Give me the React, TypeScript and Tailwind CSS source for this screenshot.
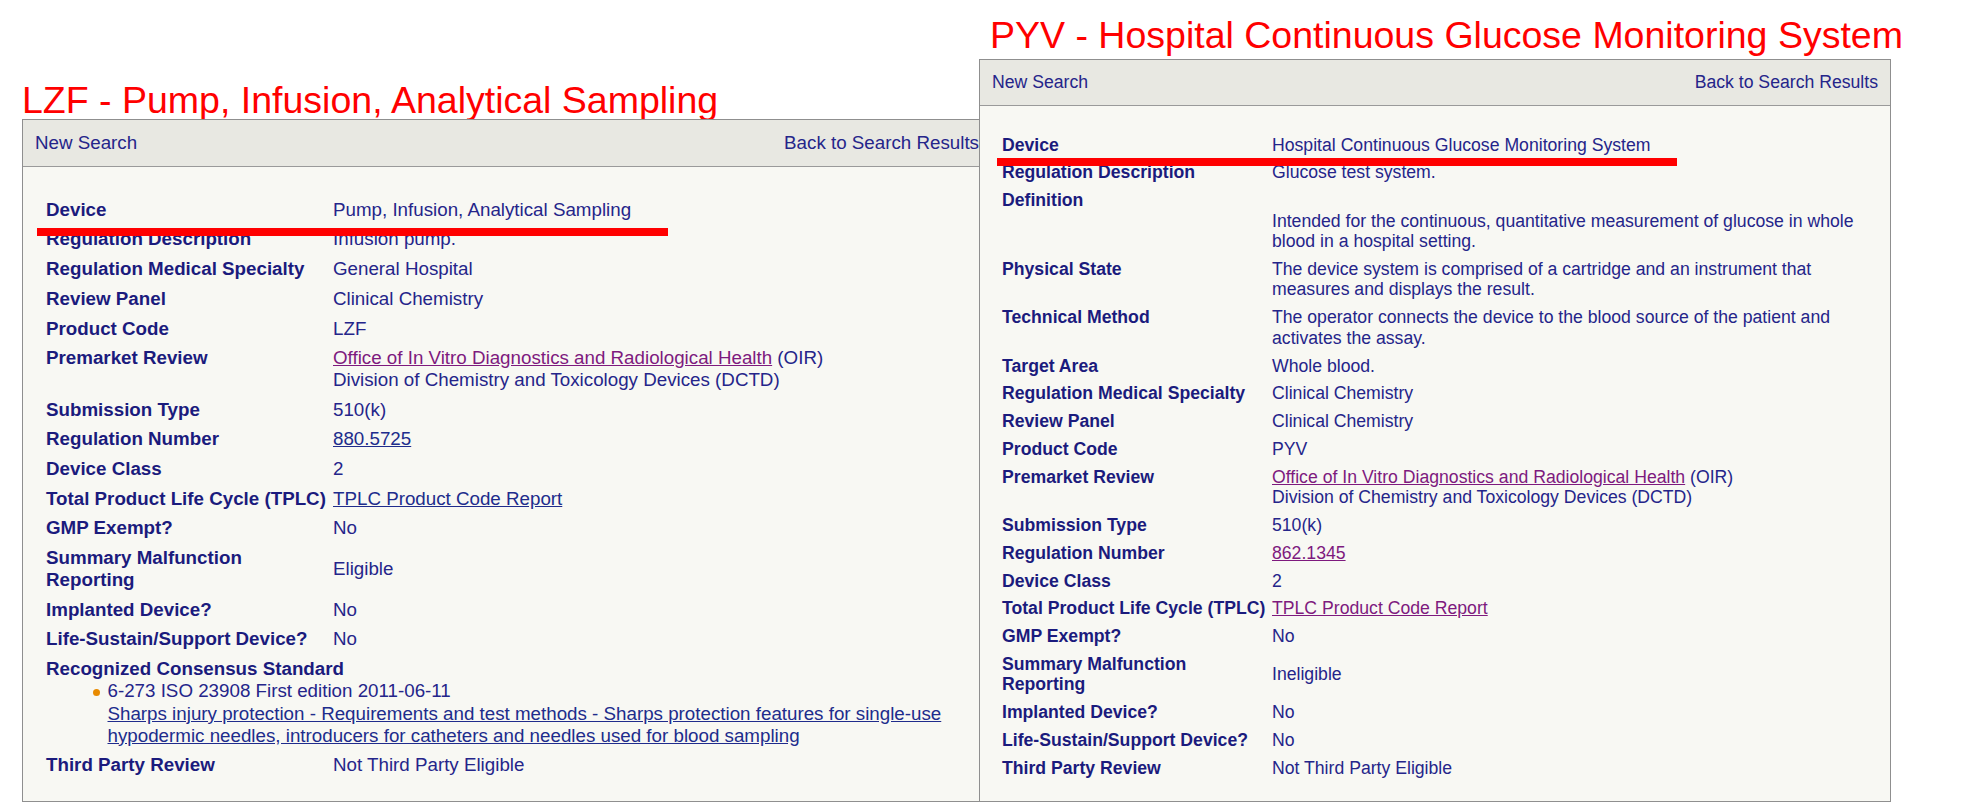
import React from "react";

const LL = "font-bold text-[#1b1b7d] self-start py-[4px]";
const LV = "text-[#25258a] self-center py-[4px]";
const RL = "font-bold text-[#1b1b7d] self-start py-[3.65px]";
const RV = "text-[#25258a] self-center py-[3.65px]";
const PURPLE = "text-[#7e1a7e] underline";
const NAVYLINK = "text-[#202c8c] underline";

function LeftPanel() {
  return (
    <div className="absolute left-[22px] top-[81px] flex flex-col">
      <div className="text-[37.5px] leading-[38px] text-[#ff0000] whitespace-nowrap">
        LZF - Pump, Infusion, Analytical Sampling
      </div>
      <div className="w-[970px] border border-[#8f8f8f] bg-[#f8f8f3] text-[18.75px] leading-[21.7px]">
        <div className="flex justify-between px-3 py-3 bg-[#e8e8e2] border-b border-[#9a9a9a] text-[#25258a]">
          <span>New Search</span>
          <span>Back to Search Results</span>
        </div>
        <div className="pl-[23px] pr-3 pt-[28px] pb-[21px] grid grid-cols-[287px_1fr]">
          <div className={LL}>Device</div>
          <div className={LV}>Pump, Infusion, Analytical Sampling</div>
          <div className={LL}>Regulation Description</div>
          <div className={LV}>Infusion pump.</div>
          <div className={LL}>Regulation Medical Specialty</div>
          <div className={LV}>General Hospital</div>
          <div className={LL}>Review Panel</div>
          <div className={LV}>Clinical Chemistry</div>
          <div className={LL}>Product Code</div>
          <div className={LV}>LZF</div>
          <div className={LL}>Premarket Review</div>
          <div className={LV}>
            <span className={PURPLE}>Office of In Vitro Diagnostics and Radiological Health</span> (OIR)
            <br />
            Division of Chemistry and Toxicology Devices (DCTD)
          </div>
          <div className={LL}>Submission Type</div>
          <div className={LV}>510(k)</div>
          <div className={LL}>Regulation Number</div>
          <div className={LV}>
            <span className={NAVYLINK}>880.5725</span>
          </div>
          <div className={LL}>Device Class</div>
          <div className={LV}>2</div>
          <div className={LL + " whitespace-nowrap"}>Total Product Life Cycle (TPLC)</div>
          <div className={LV}>
            <span className={NAVYLINK}>TPLC Product Code Report</span>
          </div>
          <div className={LL}>GMP Exempt?</div>
          <div className={LV}>No</div>
          <div className={LL}>
            Summary Malfunction
            <br />
            Reporting
          </div>
          <div className={LV}>Eligible</div>
          <div className={LL}>Implanted Device?</div>
          <div className={LV}>No</div>
          <div className={LL}>Life-Sustain/Support Device?</div>
          <div className={LV}>No</div>
          <div className="col-span-2 py-[4px]">
            <div className="font-bold text-[#1b1b7d]">Recognized Consensus Standard</div>
            <div className="pl-[46.5px] flex items-start gap-[8px]">
              <span className="mt-[9.3px] w-[7px] h-[7px] rounded-full bg-[#e88a00] shrink-0" />
              <div className="text-[#25258a]">
                <div>6-273 ISO 23908 First edition 2011-06-11</div>
                <div className={"mt-[1.5px] whitespace-nowrap " + NAVYLINK}>
                  Sharps injury protection - Requirements and test methods - Sharps protection features for single-use
                  <br />
                  hypodermic needles, introducers for catheters and needles used for blood sampling
                </div>
              </div>
            </div>
          </div>
          <div className={LL}>Third Party Review</div>
          <div className={LV}>Not Third Party Eligible</div>
        </div>
      </div>
    </div>
  );
}

function RightPanel() {
  return (
    <div className="absolute left-[979px] top-[12px] flex flex-col">
      <div className="ml-[11px] text-[37.5px] leading-[47px] text-[#ff0000] whitespace-nowrap">
        PYV - Hospital Continuous Glucose Monitoring System
      </div>
      <div className="w-[912px] border border-[#8f8f8f] bg-[#f8f8f3] text-[17.65px] leading-[20.5px]">
        <div className="flex justify-between px-3 py-3 bg-[#e8e8e2] border-b border-[#9a9a9a] text-[#25258a]">
          <span>New Search</span>
          <span>Back to Search Results</span>
        </div>
        <div className="pl-[22px] pr-3 pt-[25.5px] pb-[19px] grid grid-cols-[270px_1fr]">
          <div className={RL}>Device</div>
          <div className={RV}>Hospital Continuous Glucose Monitoring System</div>
          <div className={RL}>Regulation Description</div>
          <div className={RV}>Glucose test system.</div>
          <div className={RL}>Definition</div>
          <div className={RV + " whitespace-nowrap"}>
            <br />
            Intended for the continuous, quantitative measurement of glucose in whole
            <br />
            blood in a hospital setting.
          </div>
          <div className={RL}>Physical State</div>
          <div className={RV + " whitespace-nowrap"}>
            The device system is comprised of a cartridge and an instrument that
            <br />
            measures and displays the result.
          </div>
          <div className={RL}>Technical Method</div>
          <div className={RV + " whitespace-nowrap"}>
            The operator connects the device to the blood source of the patient and
            <br />
            activates the assay.
          </div>
          <div className={RL}>Target Area</div>
          <div className={RV}>Whole blood.</div>
          <div className={RL}>Regulation Medical Specialty</div>
          <div className={RV}>Clinical Chemistry</div>
          <div className={RL}>Review Panel</div>
          <div className={RV}>Clinical Chemistry</div>
          <div className={RL}>Product Code</div>
          <div className={RV}>PYV</div>
          <div className={RL}>Premarket Review</div>
          <div className={RV}>
            <span className={PURPLE}>Office of In Vitro Diagnostics and Radiological Health</span> (OIR)
            <br />
            Division of Chemistry and Toxicology Devices (DCTD)
          </div>
          <div className={RL}>Submission Type</div>
          <div className={RV}>510(k)</div>
          <div className={RL}>Regulation Number</div>
          <div className={RV}>
            <span className={PURPLE}>862.1345</span>
          </div>
          <div className={RL}>Device Class</div>
          <div className={RV}>2</div>
          <div className={RL + " whitespace-nowrap"}>Total Product Life Cycle (TPLC)</div>
          <div className={RV}>
            <span className={PURPLE}>TPLC Product Code Report</span>
          </div>
          <div className={RL}>GMP Exempt?</div>
          <div className={RV}>No</div>
          <div className={RL}>
            Summary Malfunction
            <br />
            Reporting
          </div>
          <div className={RV}>Ineligible</div>
          <div className={RL}>Implanted Device?</div>
          <div className={RV}>No</div>
          <div className={RL}>Life-Sustain/Support Device?</div>
          <div className={RV}>No</div>
          <div className={RL}>Third Party Review</div>
          <div className={RV}>Not Third Party Eligible</div>
        </div>
      </div>
    </div>
  );
}

export default function App() {
  return (
    <div className="relative w-[1976px] h-[802px] bg-white overflow-hidden font-['Liberation_Sans',Arial,sans-serif]">
      <LeftPanel />
      <RightPanel />
      <div className="absolute left-[37px] top-[227.5px] w-[631px] h-[8px] bg-[#ff0000]" />
      <div className="absolute left-[997px] top-[158.3px] w-[680px] h-[8px] bg-[#ff0000]" />
    </div>
  );
}
